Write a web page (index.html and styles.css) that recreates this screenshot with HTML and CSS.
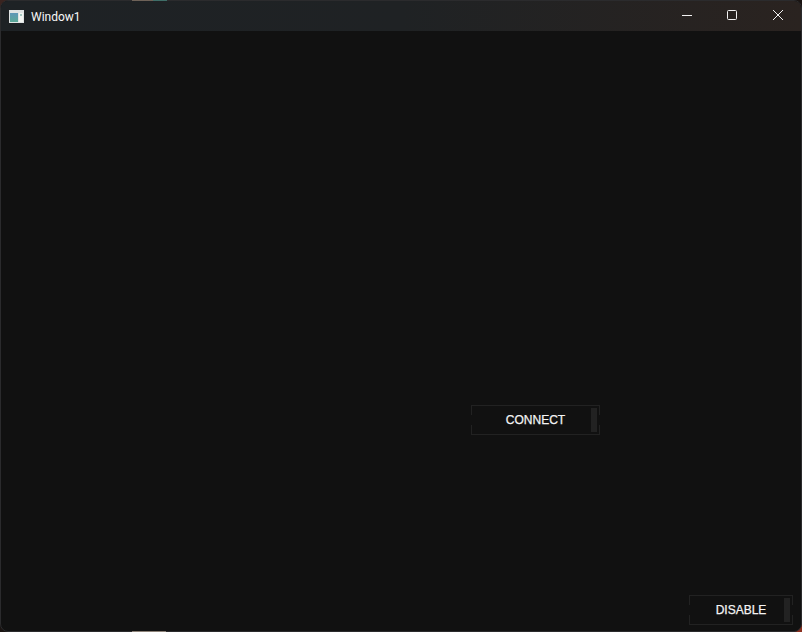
FILE: index.html
```html
<!DOCTYPE html>
<html lang="en">
<head>
<meta charset="utf-8">
<title>Window1</title>
<link rel="stylesheet" href="styles.css">
</head>
<body>
<div class="window">
  <header class="titlebar">
    <div class="title-left">
      <svg class="app-icon" width="15" height="13" viewBox="0 0 15 13" aria-hidden="true">
        <defs>
          <linearGradient id="pane" x1="0" y1="0" x2="0" y2="1">
            <stop offset="0" stop-color="#5f97b8"/>
            <stop offset="1" stop-color="#5aa896"/>
          </linearGradient>
        </defs>
        <rect width="15" height="13" fill="#dfe3e3"/>
        <rect x="1" y="3" width="8" height="9" fill="url(#pane)"/>
        <rect x="10" y="3" width="4" height="9" fill="#f2f5f2"/>
        <rect x="11" y="4" width="2" height="2" fill="#a5c8c0"/>
      </svg>
      <span class="title">Window1</span>
    </div>
    <div class="controls">
      <div class="control"><svg width="12" height="12" viewBox="0 0 12 12"><path d="M1 5.5h10" stroke="#f2f2f2" fill="none"/></svg></div>
      <div class="control"><svg width="12" height="12" viewBox="0 0 12 12"><rect x="0.5" y="0.5" width="9" height="9" rx="1" stroke="#f2f2f2" fill="none"/></svg></div>
      <div class="control"><svg width="12" height="12" viewBox="0 0 12 12"><path d="M1 0l10 10M11 0L1 10" stroke="#f2f2f2" fill="none"/></svg></div>
    </div>
  </header>
  <main class="client">
    <button class="action connect" type="button"><span class="label">CONNECT</span><span class="indicator"></span></button>
    <button class="action disable" type="button"><span class="label">DISABLE</span><span class="indicator"></span></button>
  </main>
</div>
</body>
</html>
```
FILE: styles.css
```css
* { box-sizing: border-box; }
html, body { margin: 0; height: 100%; overflow: hidden; }
body {
  position: relative;
  background:
    linear-gradient(#8a3020, #8a3020) right bottom / 8px 8px no-repeat,
    linear-gradient(#3a2420, #3a2420) left top / 8px 8px no-repeat,
    #1a1412;
}
body::before {
  content: "";
  position: absolute;
  left: 132px;
  top: 0;
  width: 35px;
  height: 1px;
  background: linear-gradient(90deg, #6e6258 0 60%, #3f6e68 60% 100%);
}
body::after {
  content: "";
  position: absolute;
  left: 132px;
  bottom: 0;
  width: 34px;
  height: 1px;
  background: #8c8278;
}
.window {
  width: 802px;
  height: 632px;
  display: flex;
  flex-direction: column;
  background: #111111;
  border: 1px solid #2b2b2d;
  border-radius: 8px;
  overflow: hidden;
}
.titlebar {
  height: 31px;
  margin-top: -1px;
  padding-top: 1px;
  flex: none;
  display: flex;
  justify-content: space-between;
  background: linear-gradient(90deg, #1e2225 0%, #1f2224 50%, #2a2320 100%);
}
.title-left { display: flex; align-items: center; gap: 7px; padding-left: 8px; }
.title { font: 400 12px Roboto, "Liberation Sans", sans-serif; color: #f8f8f8; padding-top: 1px; }
.controls { display: flex; }
.control { width: 45.5px; display: flex; align-items: center; justify-content: center; }
.client { flex: 1; display: flex; flex-direction: column; align-items: flex-start; }
.action {
  position: relative;
  height: 30px;
  padding: 0;
  display: flex;
  align-items: center;
  background: transparent;
  border: 1px solid #222222;
  color: #f4f4f4;
  font: 400 12px "Liberation Sans", Arial, sans-serif;
  -webkit-text-stroke: 0.25px #f4f4f4;
}
.action::before {
  content: "";
  position: absolute;
  left: -1px;
  right: -1px;
  top: 9px;
  height: 10px;
  border-left: 1px solid #111111;
  border-right: 1px solid #111111;
}
.connect { width: 129px; margin: 374px 0 0 470px; }
.disable { width: 104px; margin: 160px 0 0 688px; }
.label { flex: 1; text-align: center; padding-left: 8px; }
.indicator { flex: none; width: 6px; height: 24px; margin-right: 2px; background: #222222; }
```
